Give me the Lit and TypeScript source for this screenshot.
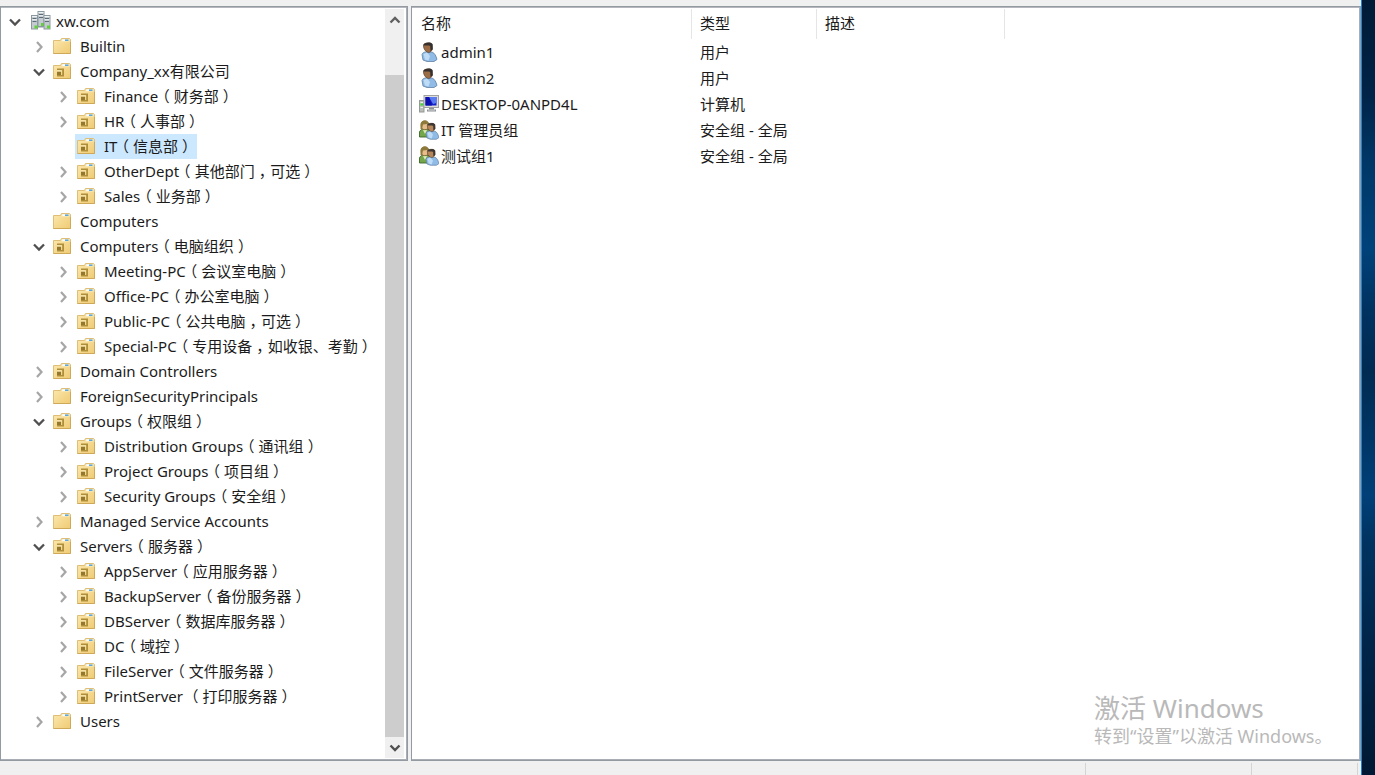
import { LitElement, html, svg, css, nothing } from "lit";
import { customElement, property, state } from "lit/decorators.js";
import { classMap } from "lit/directives/class-map.js";

type Kind = "domain" | "folder" | "ou";

interface TreeEntry {
  id: string;
  text: string;
  kind: Kind;
  branch?: boolean;
  children?: TreeEntry[];
}

const ou = (id: string, text: string, children?: TreeEntry[]): TreeEntry => ({
  id, text, kind: "ou", branch: true, children,
});
const folder = (id: string, text: string, branch = true): TreeEntry => ({
  id, text, kind: "folder", branch,
});

const DIRECTORY: TreeEntry = {
  id: "root", text: "xw.com", kind: "domain", branch: true,
  children: [
    folder("builtin", "Builtin"),
    ou("company", "Company_xx有限公司", [
      ou("finance", "Finance（财务部）"),
      ou("hr", "HR（人事部）"),
      { id: "it", text: "IT（信息部）", kind: "ou" },
      ou("other", "OtherDept（其他部门，可选）"),
      ou("sales", "Sales（业务部）"),
    ]),
    folder("computers", "Computers", false),
    ou("pcs", "Computers（电脑组织）", [
      ou("meeting", "Meeting-PC（会议室电脑）"),
      ou("office", "Office-PC（办公室电脑）"),
      ou("public", "Public-PC（公共电脑，可选）"),
      ou("special", "Special-PC（专用设备，如收银、考勤）"),
    ]),
    ou("controllers", "Domain Controllers"),
    folder("foreign", "ForeignSecurityPrincipals"),
    ou("groups", "Groups（权限组）", [
      ou("distribution", "Distribution Groups（通讯组）"),
      ou("project", "Project Groups（项目组）"),
      ou("security", "Security Groups（安全组）"),
    ]),
    folder("managed", "Managed Service Accounts"),
    ou("servers", "Servers（服务器）", [
      ou("app", "AppServer（应用服务器）"),
      ou("backup", "BackupServer（备份服务器）"),
      ou("db", "DBServer（数据库服务器）"),
      ou("dc", "DC（域控）"),
      ou("file", "FileServer（文件服务器）"),
      ou("print", "PrintServer （打印服务器）"),
    ]),
    folder("users", "Users"),
  ],
};

const OBJECTS = [
  { name: "admin1", type: "用户", icon: "user" },
  { name: "admin2", type: "用户", icon: "user" },
  { name: "DESKTOP-0ANPD4L", type: "计算机", icon: "computer" },
  { name: "IT 管理员组", type: "安全组 - 全局", icon: "group" },
  { name: "测试组1", type: "安全组 - 全局", icon: "group" },
];

const chevron = (open: boolean) => html`<svg width="14" height="14" viewBox="0 0 14 14" aria-hidden="true">
  ${open
    ? svg`<path d="M2 4.5 7 9.5 12 4.5" fill="none" stroke="#505050" stroke-width="2.3"/>`
    : svg`<path d="M5 2 9.5 7 5 12" fill="none" stroke="#a6a6a6" stroke-width="2.2"/>`}
</svg>`;

const folderIcon = (unit: boolean) => html`<svg width="18" height="18" viewBox="0 0 18 18" aria-hidden="true">
  <defs><linearGradient id="f" x1="0" y1="0" x2="1" y2="1">
    <stop offset="0" stop-color="#fce8ae"/><stop offset="1" stop-color="#efcb74"/></linearGradient></defs>
  <path d="M.5 3.5H7.5L8.5 1.5H16.5L17.5 2.5V16.5H.5Z" fill="url(#f)" stroke="#dfbe77"/>
  <path d="M9 2H16.5V4.5H8.5Z" fill="#f8edc9"/>
  <path d="M9.5 3.2H12" stroke="#fff" stroke-width="1.4"/>
  <path d="M12 3.2H15.5" stroke="#4a9fe0" stroke-width="1.4"/>
  <path d="M.5 16.5H17.5V5" fill="none" stroke="#cfa858"/>
  ${unit ? svg`<path d="M4 6.5H11V14.5H4V13H9.2V8.2H4Z" fill="#b08f3a"/><rect x="4" y="9.5" width="4" height="3.5" fill="#94782f"/><path d="M4 8.9H8.8" stroke="#fff2c0"/>` : nothing}
</svg>`;

const domainIcon = () => {
  const tower = (x: number, y: number, h: number) => svg`
    <rect x=${x + 0.5} y=${y + 0.5} width="6" height=${h} fill="#c3cbd0" stroke="#8c989f"/>
    <path d="M${x + 1.5} ${y + 3.5}H${x + 5.5}M${x + 1.5} ${y + 6.5}H${x + 5.5}" stroke="#5c6c76"/>
    <path d="M${x + 1} ${y + 1.5}H${x + 6}M${x + 1} ${y + 4.7}H${x + 6}" stroke="#edf2f4"/>
    <rect x=${x + 3.5} y=${y + h - 3} width="3" height="3" fill="#5fd334"/>`;
  return html`<svg width="20" height="19" viewBox="0 0 20 19" aria-hidden="true">
    ${tower(6.5, 0, 15)}${tower(0, 4, 13.5)}${tower(12.5, 4, 13.5)}
    <path d="M7 16H12.5" stroke="#8a969c"/>
  </svg>`;
};

const userShape = (skin: string, hair: string) => svg`
  <path d="M3 12.5C3.5 10.5 6 9.8 8 9.7L13 10C16 11.3 17 14 18 17.5L15 19.5H8L4 18Z" fill="#8fbbe6" stroke="#5f80a4" stroke-width=".8"/>
  <path d="M4.5 12 8 10.5 11 14 9.5 18.5 6 17.5Z" fill="#bedcf6"/>
  <path d="M4.5 3C5 .7 12 0 13 2.5L13.3 7C12.5 9.8 10 11.3 8 10 5.5 8.5 4.3 6 4.5 3Z" fill=${skin} stroke="#57412f" stroke-width=".7"/>
  <path d="M4.4 3.2C5 0 12.8-.5 13.6 2.5L13.7 7.5 11.5 9 11.2 4C9.5 3 7.5 3.8 4.4 3.2Z" fill=${hair}/>`;

const objectIcon = (kind: string) => {
  if (kind === "computer") {
    return html`<svg width="20" height="18" viewBox="0 0 20 18" aria-hidden="true">
      <rect x=".5" y="5.5" width="4.5" height="11.5" fill="#b9bdb9" stroke="#959995"/>
      <path d="M1.5 7.5H4M1.5 12.5H4" stroke="#efefef"/><rect x="1.5" y="8.5" width="3" height="2" fill="#3ddc28"/>
      <rect x="5" y=".5" width="14.5" height="12" fill="#dededb" stroke="#a0a1a3"/>
      <rect x="6.5" y="2" width="11" height="8.5" fill="#1620c8"/>
      <path d="M10 2H17.5V8L14 9Z" fill="#5b7cf0"/><path d="M6.5 2H10L13 10.5H6.5Z" fill="#0b0dac"/>
      <path d="M10 13H15V14.5H17V16.5H8V14.5H10Z" fill="#8d9092"/><path d="M9 15H16" stroke="#d8dadb"/>
    </svg>`;
  }
  if (kind === "group") {
    return html`<svg width="20" height="20" viewBox="0 0 20 20" aria-hidden="true">
      <path d="M.5 17V12C1 10 3 9 5 9L10 9.5 11.5 17Z" fill="#74a64b" stroke="#3c6428" stroke-width=".9"/>
      <path d="M4 10 6 14 8 10Z" fill="#dcebb9"/>
      <ellipse cx="5.8" cy="5.2" rx="3.6" ry="4.5" fill="#e7bd8a" stroke="#7e6229" stroke-width=".8"/>
      <path d="M1.5 9V4C2 0 9.5-.5 10 4V6L8 4 4 4.5 3 9Z" fill="#8d7a3a"/>
      <g transform="translate(4.5 2.5) scale(.86)">${userShape("#b8865b", "#3e3733")}</g>
    </svg>`;
  }
  return html`<svg width="20" height="20" viewBox="0 0 20 20" aria-hidden="true">${userShape("#9c6c45", "#35302e")}</svg>`;
};

/* Full-width brackets and commas sit in the middle of their em box. */
const label = (text: string) =>
  text.split(/([（），])/).map((part) => (/^[（），]$/.test(part) ? html`<span class="mid">${part}</span>` : part));

const shared = css`
  * { box-sizing: border-box; }
  svg { display: block; flex: none; }
  button { font: inherit; color: inherit; border: 0; padding: 0; margin: 0; background: none; text-align: left; }
  .mid { font-feature-settings: "halt"; margin: 0 4px; }
`;

@customElement("directory-tree")
class DirectoryTree extends LitElement {
  @state() private open = new Set(["root", "company", "pcs", "groups", "servers"]);
  @state() private selected = "it";

  static styles = [shared, css`
    :host { display: block; flex: 1; min-width: 0; overflow: hidden; }
    ul { list-style: none; margin: 0; padding: 0; }
    ul ul { padding-left: 24px; }
    .row { display: flex; align-items: center; height: 25px; }
    .toggle { flex: none; width: 24px; height: 25px; display: grid; place-items: center; }
    .item { display: flex; align-items: center; height: 25px; padding: 0 4px 2px 2px; white-space: nowrap; }
    .icon { width: 27px; flex: none; }
    .domain { padding-left: 2px; }
    .chosen { background: #cce8ff; }
    .tree { padding-left: 2px; }
  `];

  private toggle(id: string) {
    const next = new Set(this.open);
    next.has(id) ? next.delete(id) : next.add(id);
    this.open = next;
  }

  private entry(e: TreeEntry): unknown {
    const isOpen = this.open.has(e.id);
    return html`<li role="treeitem" aria-selected=${this.selected === e.id}>
      <div class="row">
        ${e.branch
          ? html`<button class="toggle" aria-label=${e.text} aria-expanded=${isOpen} @click=${() => this.toggle(e.id)}>${chevron(isOpen)}</button>`
          : html`<span class="toggle"></span>`}
        <button class=${classMap({ item: true, chosen: this.selected === e.id })} @click=${() => (this.selected = e.id)}>
          <span class=${classMap({ icon: true, domain: e.kind === "domain" })}>${e.kind === "domain" ? domainIcon() : folderIcon(e.kind === "ou")}</span>
          <span>${label(e.text)}</span>
        </button>
      </div>
      ${e.children && isOpen ? html`<ul role="group">${e.children.map((c) => this.entry(c))}</ul>` : nothing}
    </li>`;
  }

  render() {
    return html`<ul class="tree" role="tree">${this.entry(DIRECTORY)}</ul>`;
  }
}

@customElement("scroll-rail")
class ScrollRail extends LitElement {
  static styles = [shared, css`
    :host { display: flex; flex-direction: column; flex: none; width: 19px; background: #f0f0f0; }
    button { height: 21px; display: grid; place-items: center; }
    .track { flex: 1; display: flex; flex-direction: column; padding-top: 45px; }
    .thumb { flex: 1; background: #cdcdcd; }
  `];
  render() {
    return html`
      <button aria-label="向上滚动"><svg width="12" height="12" viewBox="0 0 12 12"><path d="M1.5 8.5 6 4 10.5 8.5" fill="none" stroke="#606060" stroke-width="2.4"/></svg></button>
      <div class="track"><div class="thumb"></div></div>
      <button aria-label="向下滚动"><svg width="12" height="12" viewBox="0 0 12 12"><path d="M1.5 3.5 6 8 10.5 3.5" fill="none" stroke="#505050" stroke-width="2.4"/></svg></button>`;
  }
}

@customElement("object-list")
class ObjectList extends LitElement {
  @property({ attribute: false }) rows = OBJECTS;

  static styles = [shared, css`
    :host { display: block; }
    table { width: 100%; table-layout: fixed; border-collapse: separate; border-spacing: 0; }
    .c-name { width: 279px; }
    .c-type { width: 125px; }
    .c-desc { width: 188px; }
    th { height: 30px; padding: 0 8px 2px; font-weight: 400; text-align: left; border-right: 1px solid #e5e5e5; }
    th:last-child { border: 0; }
    td { height: 26px; padding: 0 8px; white-space: nowrap; }
    td:first-child { padding-left: 6px; }
    .name { display: flex; align-items: center; gap: 2px; }
  `];

  render() {
    return html`<table>
      <colgroup><col class="c-name"><col class="c-type"><col class="c-desc"><col></colgroup>
      <thead><tr><th scope="col">名称</th><th scope="col">类型</th><th scope="col">描述</th><th></th></tr></thead>
      <tbody>${this.rows.map((r) => html`<tr>
        <td><span class="name">${objectIcon(r.icon)}<span>${r.name}</span></span></td>
        <td>${r.type}</td><td></td><td></td>
      </tr>`)}</tbody>
    </table>`;
  }
}

@customElement("app-root")
class AppRoot extends LitElement {
  static styles = [shared, css`
    :host {
      display: grid; grid-template-columns: minmax(0, 1fr) 14px; height: 100vh; overflow: hidden;
      font: 15px/20px "Noto Sans", "Noto Sans CJK SC", sans-serif; color: #1b1b1b; background: #f0f0f0;
    }
    .window { display: flex; flex-direction: column; min-width: 0; padding-top: 6px; }
    .panes { flex: 1; min-height: 0; display: grid; grid-template-columns: 408px minmax(0, 1fr); gap: 3px; }
    .pane { background: #fff; border: 1px solid #949aa2; box-shadow: inset -1px -1px #a9adb5, inset 0 1px #b4b8be; min-width: 0; }
    .left { display: flex; padding: 2px 3px 2px 0; }
    .right { position: relative; padding: 2px 1px 0; }
    .notice { position: absolute; right: 26px; bottom: 11px; width: 240px; color: #b9b9b9; white-space: nowrap; }
    .notice h1 { margin: 0; font-size: 26px; line-height: 30px; font-weight: 400; }
    .notice p { margin: 0; font-size: 18px; line-height: 26px; }
    .status { flex: none; height: 14px; display: flex; padding: 2px 3px 0 0; }
    .cell { border-right: 1px solid #d4d4d4; }
    .grow { flex: 1; }
    .mode { width: 166px; }
    .tail { width: 106px; }
    .desktop {
      border-left: 1px solid #1883d7;
      background: linear-gradient(#001a36 0, #002347 12%, #003767 21%, #00427a 32%, #003260 40%, #002a52 48%, #003260 54%, #004078 64%, #003260 70%, #00264b 82%, #001a36 98%);
    }
  `];

  render() {
    return html`
      <main class="window">
        <div class="panes">
          <section class="pane left"><directory-tree></directory-tree><scroll-rail></scroll-rail></section>
          <section class="pane right">
            <object-list></object-list>
            <aside class="notice"><h1>激活 Windows</h1><p>转到“设置”以激活 Windows。</p></aside>
          </section>
        </div>
        <footer class="status"><div class="cell grow"></div><div class="cell mode"></div><div class="cell tail"></div></footer>
      </main>
      <div class="desktop"></div>`;
  }
}
